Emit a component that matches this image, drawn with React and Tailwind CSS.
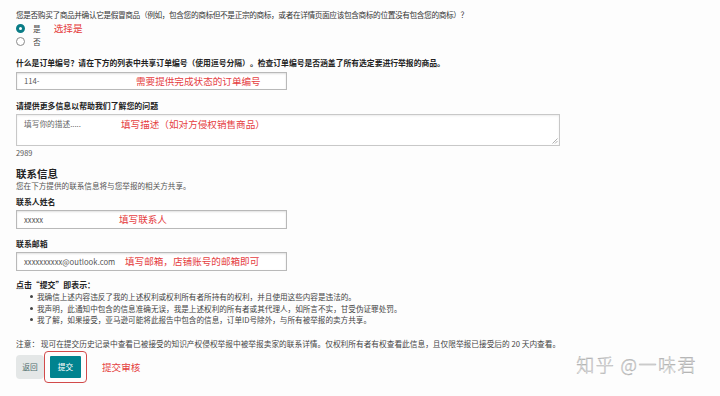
const Radio = ({ checked, label }) => (
  <div className="flex h-[13px] items-center">
    <span
      className={
        checked
          ? "ml-[16px] h-[9px] w-[9px] rounded-full border-[3px] border-[#0a7c86] bg-white"
          : "ml-[16px] h-[9px] w-[9px] rounded-full border border-[#8a8a8a] bg-white"
      }
    />
    <span className="ml-[8px] text-[7.7px] text-[#444]">{label}</span>
  </div>
);

const FakeInput = ({ value, note, noteLeft, className = "" }) => (
  <div
    className={`flex items-center border border-[#b9b9b9] bg-white pl-[7px] text-[7.7px] text-[#555] shadow-[inset_0_1px_2px_rgba(0,0,0,0.12)] ${className}`}
  >
    <span className={noteLeft}>{value}</span>
    <span className="text-[9.6px] text-[#e5403f]">{note}</span>
  </div>
);

export default function App() {
  return (
    <div className="relative h-[396px] w-[720px] overflow-hidden bg-[#fdfdfd] pl-[16px] pt-[9px] font-['Noto_Sans_CJK_SC','Noto_Sans',sans-serif] text-[#333]">
      <p className="h-[12px] text-[7.7px] leading-[12px] tracking-[-0.4px]">
        您是否购买了商品并确认它是假冒商品（例如，包含您的商标但不是正宗的商标，或者在详情页面应该包含商标的位置没有包含您的商标）？
      </p>

      <div className="-ml-[16px] mt-[1px] flex flex-col">
        <div className="flex items-center">
          <Radio checked label="是" />
          <span className="ml-[13px] text-[9.6px] leading-[13px] text-[#e5403f]">选择是</span>
        </div>
        <Radio label="否" />
      </div>

      <p className="mt-[9px] h-[12px] text-[7.8px] font-bold leading-[12px] text-[#222]">
        什么是订单编号？请在下方的列表中共享订单编号（使用逗号分隔）。检查订单编号是否涵盖了所有选定要进行举报的商品。
      </p>
      <FakeInput
        className="mt-[3px] h-[18px] w-[271px]"
        value="114-"
        noteLeft="w-[112px]"
        note="需要提供完成状态的订单编号"
      />

      <p className="mt-[10px] h-[12px] text-[7.9px] font-bold leading-[12px] text-[#222]">
        请提供更多信息以帮助我们了解您的问题
      </p>
      <div className="relative mt-[2px] flex h-[32px] w-[544px] items-start border border-[#c8c8c8] bg-white pl-[7px] pt-[3px] shadow-[inset_0_1px_2px_rgba(0,0,0,0.08)]">
        <span className="w-[97px] text-[7.7px] text-[#666]">填写你的描述.....</span>
        <span className="text-[9.6px] leading-[12px] text-[#e5403f]">填写描述（如对方侵权销售商品）</span>
        <svg className="absolute bottom-[1px] right-[1px]" width="6" height="6" viewBox="0 0 6 6">
          <path d="M5.5 0.5 L0.5 5.5 M5.5 3 L3 5.5" stroke="#9a9a9a" strokeWidth="0.8" />
        </svg>
      </div>
      <p className="mt-[2px] h-[10px] text-[7.4px] leading-[10px] text-[#555]">2989</p>

      <h2 className="mt-[9px] h-[14px] text-[10.5px] font-bold leading-[14px] text-[#222]">联系信息</h2>
      <p className="h-[10px] text-[7.6px] leading-[10px] text-[#555]">
        您在下方提供的联系信息将与您举报的相关方共享。
      </p>

      <p className="mt-[5px] h-[12px] text-[7.9px] font-bold leading-[12px] text-[#222]">联系人姓名</p>
      <FakeInput
        className="mt-[2px] h-[19px] w-[271px]"
        value="xxxxx"
        noteLeft="w-[95px]"
        note="填写联系人"
      />

      <p className="mt-[9px] h-[12px] text-[7.9px] font-bold leading-[12px] text-[#222]">联系邮箱</p>
      <FakeInput
        className="mt-[2px] h-[19px] w-[271px]"
        value="xxxxxxxxxx@outlook.com"
        noteLeft="w-[101px]"
        note="填写邮箱，店铺账号的邮箱即可"
      />

      <p className="mt-[8px] h-[12px] text-[7.9px] font-bold leading-[12px] text-[#222]">点击“提交”即表示：</p>
      <ul className="h-[35px] text-[7.6px] leading-[11.5px] text-[#444]">
        {[
          "我确信上述内容违反了我的上述权利或权利所有者所持有的权利，并且使用这些内容是违法的。",
          "我声明，此通知中包含的信息准确无误，我是上述权利的所有者或其代理人，如所言不实，甘受伪证罪处罚。",
          "我了解，如果接受，亚马逊可能将此报告中包含的信息，订单ID号除外，与所有被举报的卖方共享。",
        ].map((t) => (
          <li key={t} className="flex items-center">
            <span className="ml-[14px] mr-[4px] h-[3px] w-[3px] rounded-full bg-[#444]" />
            <span>{t}</span>
          </li>
        ))}
      </ul>

      <p className="mt-[12px] h-[12px] text-[7.7px] leading-[12px] text-[#444]">
        注意：&nbsp;现可在提交历史记录中查看已被接受的知识产权侵权举报中被举报卖家的联系详情。仅权利所有者有权查看此信息，且仅限举报已接受后的 20 天内查看。
      </p>

      <div className="mt-[1px] flex items-center">
        <button className="h-[24px] w-[28px] rounded-sm bg-[#e4e7e7] text-[7.7px] text-[#4d6b6b]">返回</button>
        <div className="flex h-[32px] w-[43px] items-center justify-center rounded-sm border border-[#d24a4a]">
          <button className="h-[22px] w-[31px] rounded-[1px] bg-[#00838f] text-[7.7px] text-white">提交</button>
        </div>
        <span className="ml-[15px] text-[9.6px] text-[#e5403f]">提交审核</span>
      </div>

      <div className="absolute bottom-[22px] right-[23px] text-[18px] font-light leading-[20px] tracking-[1.5px] text-white [-webkit-text-stroke:0.45px_#a8a8a8]">
        知乎 @一味君
      </div>
    </div>
  );
}
